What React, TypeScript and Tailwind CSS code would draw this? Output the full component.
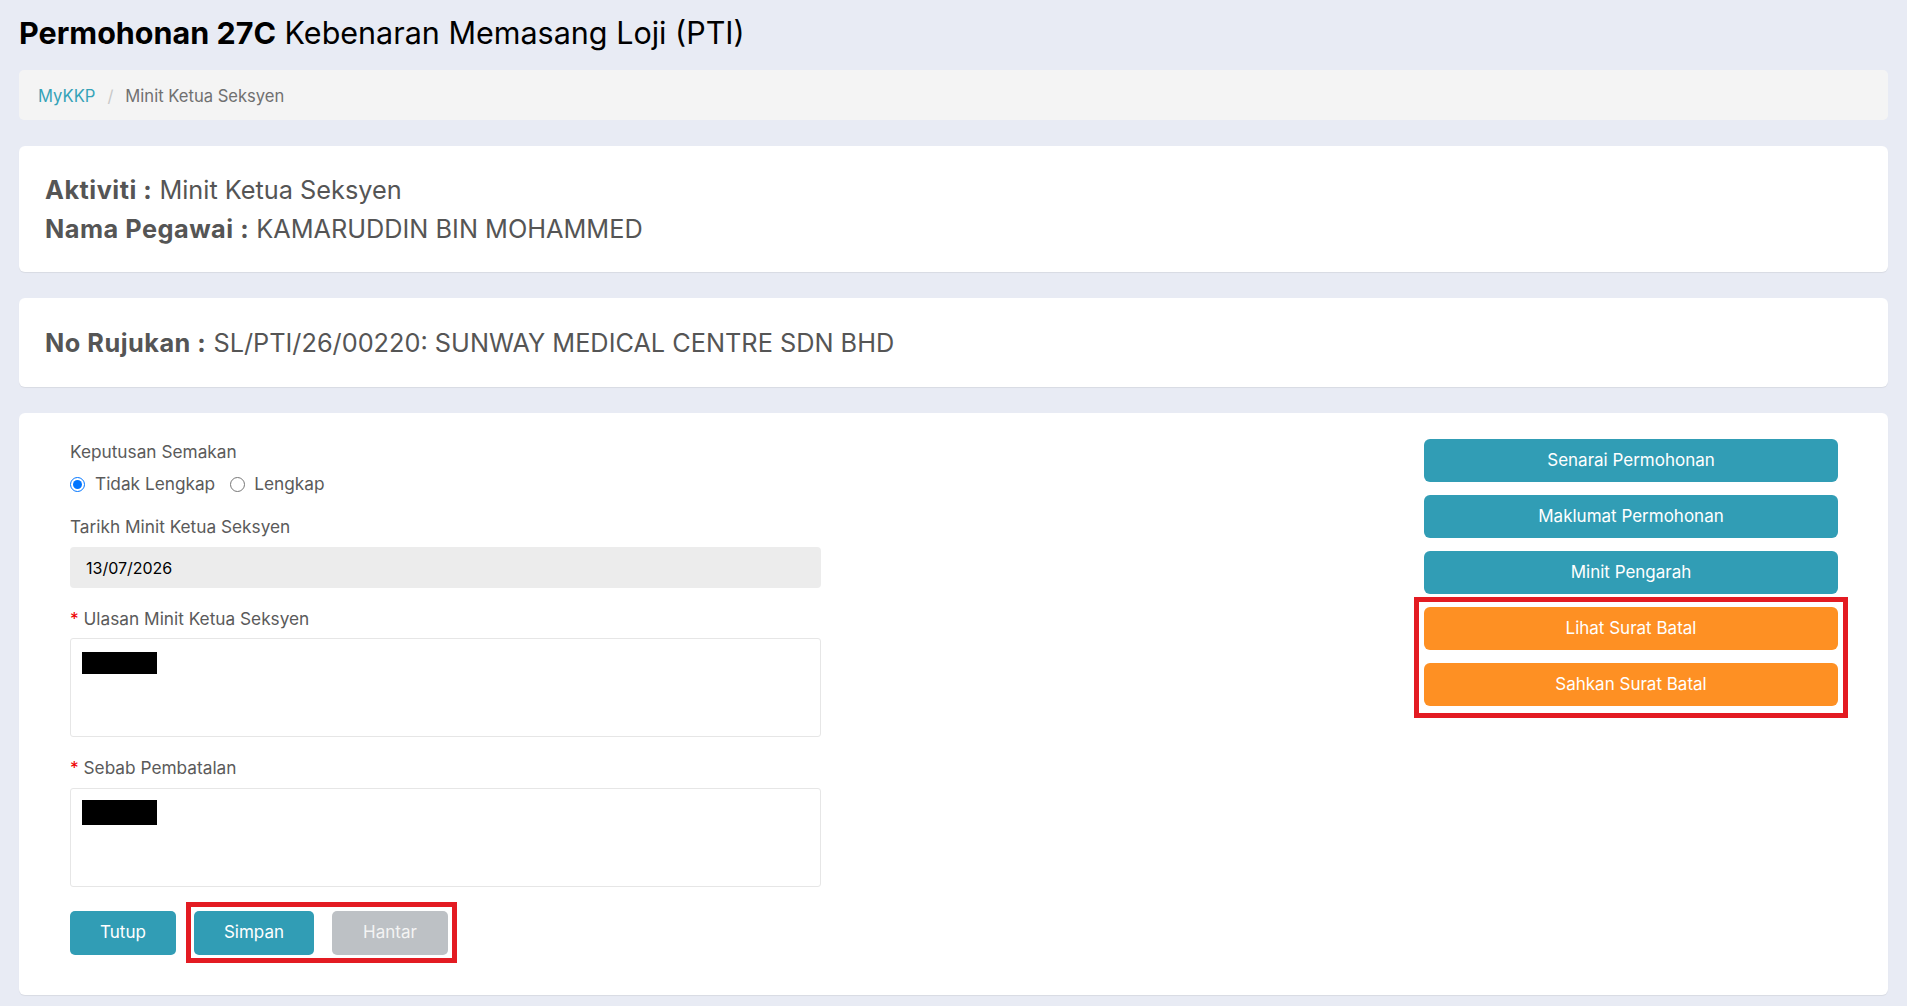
const font = { fontFamily: "Inter, 'Noto Sans', sans-serif" };

function Redacted({ h }: { h: string }) {
  return <div className={`w-[75px] bg-black ${h}`} />;
}

function SideButton({ label, tone }: { label: string; tone: "teal" | "orange" }) {
  const bg = tone === "teal" ? "bg-[#319db5]" : "bg-[#fe9023]";
  return (
    <button
      type="button"
      className={`h-[43px] w-full rounded-[6px] ${bg} text-[17px] text-white`}
    >
      {label}
    </button>
  );
}

export default function App() {
  return (
    <div
      className="min-h-screen bg-[#e8ebf4] px-[19px] pt-[14px] pb-[12px] text-[#555]"
      style={font}
    >
      <h1 className="text-[30.5px] leading-[38px] text-black">
        <span className="font-bold">Permohonan 27C</span> Kebenaran Memasang Loji (PTI)
      </h1>

      <nav className="mt-[18px] flex h-[50px] items-center rounded-[5px] bg-[#f4f4f4] px-[19px] pt-[2px] text-[16.6px]">
        <a className="text-[#35a3b8]">MyKKP</a>
        <span className="px-[12px] text-[#c8c8c8]">/</span>
        <span className="text-[#707070]">Minit Ketua Seksyen</span>
      </nav>

      <div className="mt-[26px] flex flex-col gap-[26px]">
        <section className="rounded-[6px] bg-white px-[26px] py-[24px] text-[25.3px] leading-[39px] text-[#555] shadow-[0_1px_1px_rgba(0,0,0,0.07)]">
          <div>
            <span className="font-bold tracking-[0.5px]">Aktiviti :</span> Minit Ketua Seksyen
          </div>
          <div>
            <span className="font-bold tracking-[0.5px]">Nama Pegawai :</span> KAMARUDDIN BIN MOHAMMED
          </div>
        </section>

        <section className="rounded-[6px] bg-white px-[26px] py-[25px] text-[25.3px] leading-[39px] text-[#555] shadow-[0_1px_1px_rgba(0,0,0,0.07)]">
          <span className="font-bold tracking-[0.5px]">No Rujukan :</span> SL/PTI/26/00220: SUNWAY MEDICAL CENTRE SDN BHD
        </section>

        <section className="flex justify-between rounded-[6px] bg-white pt-[26px] pb-[40px] pl-[51px] pr-[50px] shadow-[0_1px_1px_rgba(0,0,0,0.07)]">
          {/* borang minit */}
          <div className="w-[751px] text-[17.25px] text-[#5a5a5a]">
            <div className="leading-[26px]">Keputusan Semakan</div>
            <div className="mt-[6px] flex h-[26px] items-center">
              <label className="flex items-center">
                <input type="radio" name="keputusan" defaultChecked className="m-0 h-[15px] w-[15px]" />
                <span className="ml-[10px]">Tidak Lengkap</span>
              </label>
              <label className="ml-[15px] flex items-center">
                <input type="radio" name="keputusan" className="m-0 h-[15px] w-[15px]" />
                <span className="ml-[9px]">Lengkap</span>
              </label>
            </div>

            <div className="mt-[17px] leading-[26px]">Tarikh Minit Ketua Seksyen</div>
            <div className="mt-[7px] flex h-[41px] items-center rounded-[4px] bg-[#ececec] px-[16px] text-[16px] text-black">
              13/07/2026
            </div>

            <div className="mt-[18px] leading-[26px]">
              <span className="text-[#e00]">*</span> Ulasan Minit Ketua Seksyen
            </div>
            <div className="mt-[6px] h-[99px] rounded-[3px] border border-[#e6e6e6] px-[11px] pt-[13px]">
              <Redacted h="h-[22px]" />
            </div>

            <div className="mt-[18px] leading-[26px]">
              <span className="text-[#e00]">*</span> Sebab Pembatalan
            </div>
            <div className="mt-[7px] h-[99px] rounded-[3px] border border-[#e6e6e6] px-[11px] pt-[11px]">
              <Redacted h="h-[25px]" />
            </div>

            <div className="mt-[24px] flex gap-[18px] text-[17px]">
              <button type="button" className="h-[44px] w-[106px] rounded-[5px] bg-[#319db5] text-white">
                Tutup
              </button>
              <div className="relative flex gap-[18px]">
                <button type="button" className="h-[44px] w-[120px] rounded-[5px] bg-[#319db5] text-white">
                  Simpan
                </button>
                <button type="button" className="h-[44px] w-[116px] rounded-[5px] bg-[#bdc1c5] text-[#f4f4f4]">
                  Hantar
                </button>
                <div className="pointer-events-none absolute -top-[9px] -bottom-[8px] -left-[8px] -right-[9px] border-[5px] border-[#e31b22]" />
              </div>
            </div>
          </div>

          {/* tindakan */}
          <div className="w-[414px]">
            <div className="flex flex-col gap-[13px]">
              <SideButton label="Senarai Permohonan" tone="teal" />
              <SideButton label="Maklumat Permohonan" tone="teal" />
              <SideButton label="Minit Pengarah" tone="teal" />
              <div className="relative flex flex-col gap-[13px]">
                <SideButton label="Lihat Surat Batal" tone="orange" />
                <SideButton label="Sahkan Surat Batal" tone="orange" />
                <div className="pointer-events-none absolute -top-[10px] -bottom-[12px] -left-[10px] -right-[10px] border-[5px] border-[#e31b22]" />
              </div>
            </div>
          </div>
        </section>
      </div>
    </div>
  );
}
